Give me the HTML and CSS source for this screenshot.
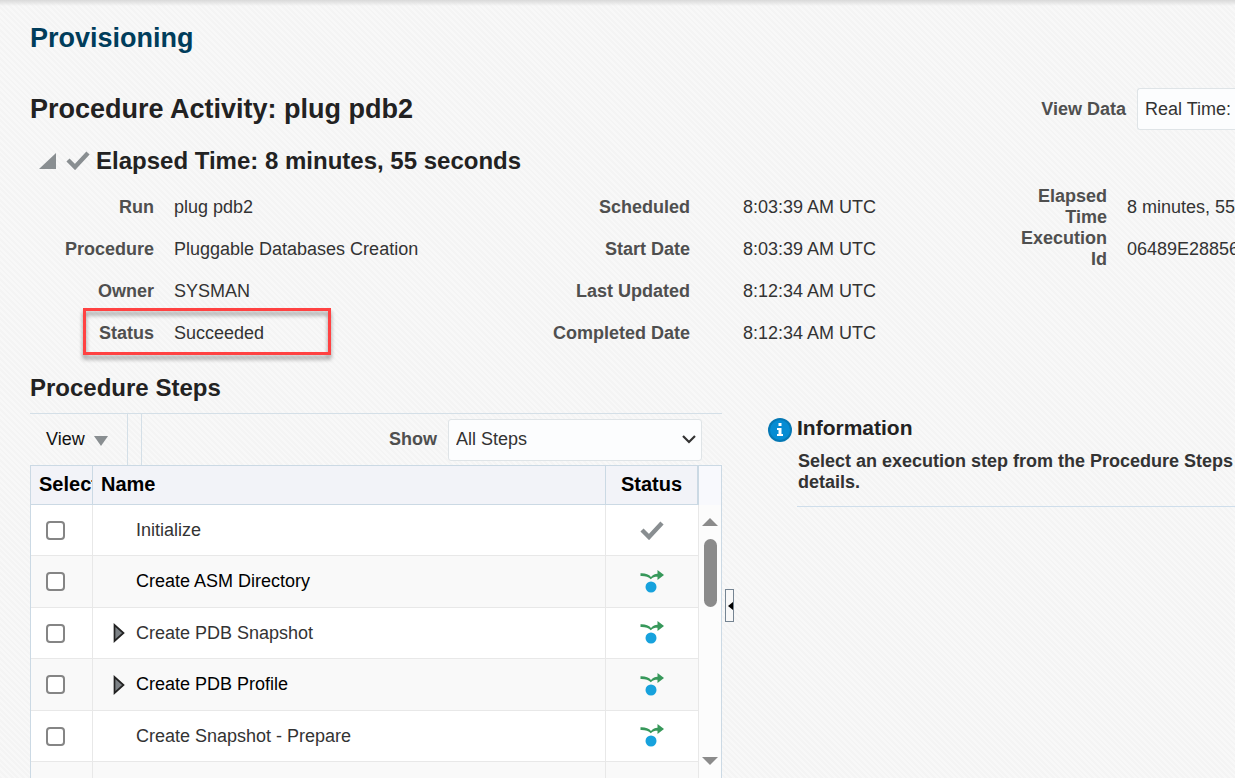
FILE: index.html
```html
<!DOCTYPE html>
<html lang="en">
<head>
<meta charset="utf-8">
<title>Provisioning</title>
<link rel="stylesheet" href="styles.css">
</head>
<body>
<svg class="sprite" aria-hidden="true">
  <symbol id="check" viewBox="0 0 24 20"><path d="M2 10l7 7L22 3" fill="none" stroke="#898e91" stroke-width="4.4"/></symbol>
  <symbol id="step" viewBox="0 0 24 24">
    <path d="M0.500 3.200C5 3 9 4 11 7C13 4.500 15 3.700 17.500 3.700V0L24 5L17.500 10V6.800C15 6.800 12.500 7.300 10.800 9.200C8.500 6.800 5 5.800 0.500 6Z" fill="#37985a"/>
    <circle cx="11" cy="17" r="5.500" fill="#17a2dd"/>
  </symbol>
  <symbol id="expand" viewBox="0 0 12 20"><path d="M1.500 2v16L10.500 10z" fill="#7c8185" stroke="#222" stroke-width="1.700"/></symbol>
</svg>
<main class="page">
  <h1 class="page-title">Provisioning</h1>
  <div class="activity-bar">
    <h2 class="activity-title">Procedure Activity: plug pdb2</h2>
    <label class="field-label" for="view-data">View Data</label>
    <select class="view-select" id="view-data"><option>Real Time:</option></select>
  </div>
  <div class="elapsed">
    <button class="disclose" type="button" aria-label="Collapse"><svg width="17" height="16" viewBox="0 0 17 16"><path d="M17 0v16H0z" fill="#898e91"/></svg></button>
    <svg class="elapsed-check"><use href="#check"/></svg>
    <h3 class="section-title">Elapsed Time: 8 minutes, 55 seconds</h3>
  </div>
  <section class="facts">
    <dl class="fact-group run">
      <div class="fact"><dt>Run</dt><dd>plug pdb2</dd></div>
      <div class="fact"><dt>Procedure</dt><dd>Pluggable Databases Creation</dd></div>
      <div class="fact"><dt>Owner</dt><dd>SYSMAN</dd></div>
      <div class="fact highlighted"><dt>Status</dt><dd>Succeeded</dd></div>
    </dl>
    <dl class="fact-group dates">
      <div class="fact"><dt>Scheduled</dt><dd>8:03:39 AM UTC</dd></div>
      <div class="fact"><dt>Start Date</dt><dd>8:03:39 AM UTC</dd></div>
      <div class="fact"><dt>Last Updated</dt><dd>8:12:34 AM UTC</dd></div>
      <div class="fact"><dt>Completed Date</dt><dd>8:12:34 AM UTC</dd></div>
    </dl>
    <dl class="fact-group execution">
      <div class="fact"><dt>Elapsed Time</dt><dd>8 minutes, 55</dd></div>
      <div class="fact"><dt>Execution Id</dt><dd>06489E28856</dd></div>
    </dl>
  </section>
  <div class="panels">
    <section class="steps">
      <h3 class="section-title steps-title">Procedure Steps</h3>
      <div class="toolbar">
        <button class="view-menu" type="button">View <svg class="menu-arrow" width="14" height="10" viewBox="0 0 14 10"><path d="M0 0h14L7 10z" fill="#898e91"/></svg></button>
        <div class="divider"></div>
        <label class="field-label" for="show">Show</label>
        <div class="select-box">
          <select class="show-select" id="show"><option>All Steps</option></select>
          <svg class="chevron" width="14" height="9" viewBox="0 0 14 9"><path d="M1 1l6 6 6-6" fill="none" stroke="#333" stroke-width="2.200"/></svg>
        </div>
      </div>
      <div class="grid">
        <table class="step-table">
          <thead><tr><th class="col-select">Select</th><th>Name</th><th class="col-status">Status</th></tr></thead>
          <tbody>
            <tr><td><input type="checkbox" aria-label="Initialize"></td><td><span class="name">Initialize</span></td><td class="state"><svg class="done"><use href="#check"/></svg></td></tr>
            <tr><td><input type="checkbox" aria-label="Create ASM Directory"></td><td><span class="name">Create ASM Directory</span></td><td class="state"><svg class="step"><use href="#step"/></svg></td></tr>
            <tr><td><input type="checkbox" aria-label="Create PDB Snapshot"></td><td><span class="name branch"><svg class="arrow"><use href="#expand"/></svg>Create PDB Snapshot</span></td><td class="state"><svg class="step"><use href="#step"/></svg></td></tr>
            <tr><td><input type="checkbox" aria-label="Create PDB Profile"></td><td><span class="name branch"><svg class="arrow"><use href="#expand"/></svg>Create PDB Profile</span></td><td class="state"><svg class="step"><use href="#step"/></svg></td></tr>
            <tr><td><input type="checkbox" aria-label="Create Snapshot - Prepare"></td><td><span class="name">Create Snapshot - Prepare</span></td><td class="state"><svg class="step"><use href="#step"/></svg></td></tr>
            <tr><td><input type="checkbox" aria-label="Next step"></td><td></td><td class="state"><svg class="done"><use href="#check"/></svg></td></tr>
          </tbody>
        </table>
        <div class="scroll">
          <div class="scroll-head"></div>
          <div class="scroll-track">
            <svg width="16" height="8" viewBox="0 0 16 8"><path d="M8 0l8 8H0z" fill="#8b8b8b"/></svg>
            <div class="thumb"></div>
            <svg class="scroll-down" width="16" height="8" viewBox="0 0 16 8"><path d="M0 0h16L8 8z" fill="#8b8b8b"/></svg>
          </div>
        </div>
      </div>
    </section>
    <div class="splitter"><button class="splitter-handle" type="button" aria-label="Collapse panel"><svg width="5" height="8" viewBox="0 0 5 8"><path d="M5 0v8L0 4z"/></svg></button></div>
    <aside class="info">
      <svg class="info-icon" width="24" height="24" viewBox="0 0 24 24"><circle cx="12" cy="12" r="12" fill="#0578b4"/><circle cx="12" cy="12" r="10" fill="#058cd3"/><path d="M10.500 5h3v3h-3zM9 10h4.500v6H15v2H9v-2h1.500v-4H9z" fill="#fff"/></svg>
      <div class="info-body">
        <h4 class="info-title">Information</h4>
        <p class="info-text">Select an execution step from the Procedure Steps<br>details.</p>
      </div>
    </aside>
  </div>
</main>
</body>
</html>
```

FILE: styles.css
```css
*, *::after { box-sizing: border-box; }
body {
  margin: 0;
  height: 100vh;
  overflow: hidden;
  font: 18px/21px "Liberation Sans", Arial, sans-serif;
  color: #333;
  background:
    linear-gradient(#d9d9d9, rgba(245, 245, 245, 0)) 0 0 / 100% 6px no-repeat,
    repeating-linear-gradient(45deg, #f4f4f4 0 2px, #f8f8f8 2px 4px);
}
h1, h2, h3, h4, p, dl, dd { margin: 0; }
button, select { font: inherit; color: inherit; }
button { padding: 0; border: 0; background: none; }
.sprite { position: absolute; width: 0; height: 0; }
.page { display: flex; flex-direction: column; height: 100%; padding: 20px 0 0 30px; overflow: hidden; }
.page-title { font-size: 27px; line-height: 36px; color: #003d5b; }
.activity-bar { display: flex; align-items: center; margin-top: 32px; }
.activity-title { flex: 1; font-size: 27px; line-height: 38px; color: #222; }
.field-label { color: #4f4f4f; font-weight: bold; }
.view-select, .show-select {
  appearance: none;
  height: 42px;
  padding: 0 7px;
  border: 1px solid #dfe4e7;
  border-radius: 3px;
  background: #fcfdfe;
}
.view-select { width: 98px; margin-left: 11px; padding-right: 0; border-right: 0; border-radius: 3px 0 0 3px; }
.elapsed { display: flex; align-items: center; height: 40px; margin-top: 11px; padding-left: 9px; }
.disclose { display: flex; width: 17px; }
.elapsed-check { width: 24px; height: 20px; margin: 0 6px 2px 10px; }
.section-title { font-size: 24px; line-height: 30px; color: #222; }
.facts { display: grid; grid-template-columns: 450fr 536fr 219fr; margin-top: 5px; }
.fact-group { min-width: 0; }
.fact { display: grid; align-items: center; height: 42px; white-space: nowrap; }
.run .fact { grid-template-columns: 124px 1fr; column-gap: 20px; }
.dates .fact { grid-template-columns: 210px 1fr; column-gap: 53px; }
.execution .fact { grid-template-columns: 91px 1fr; column-gap: 20px; }
.execution dt { white-space: normal; }
.fact dt { text-align: right; font-weight: bold; color: #4f4f4f; }
.highlighted { position: relative; }
.highlighted::after {
  content: "";
  position: absolute;
  left: 53px;
  top: -4px;
  width: 248px;
  height: 47px;
  border: 3px solid #ff4242;
  filter: drop-shadow(0 4px 2px rgba(0, 0, 0, .4));
}
.panels { display: grid; grid-template-columns: 692fr 513fr; grid-template-rows: 1fr; flex: 1; min-height: 0; position: relative; }
.steps { display: flex; flex-direction: column; min-width: 0; min-height: 0; }
.steps-title { margin: 19px 0 10px; }
.toolbar { display: flex; align-items: center; height: 52px; border-top: 1px solid #d4dfe7; padding-right: 20px; }
.view-menu { display: flex; align-items: center; gap: 9px; width: 98px; height: 100%; padding-left: 16px; border-right: 1px solid #d4dfe7; color: #111; }
.menu-arrow { margin-top: 2px; }
.divider { width: 14px; height: 100%; border-right: 1px solid #d4dfe7; margin-right: auto; }
.select-box { display: grid; align-items: center; width: 254px; margin-left: 11px; }
.show-select, .chevron { grid-area: 1 / 1; }
.chevron { justify-self: end; margin-right: 6px; pointer-events: none; }
.grid { display: flex; flex: 1; min-height: 0; overflow: hidden; border: 1px solid #cbd9e4; border-bottom: 0; background: #fff; }
.step-table { flex: 1; width: 100%; min-width: 0; align-self: flex-start; table-layout: fixed; border-collapse: separate; border-spacing: 0; }
.step-table th { height: 39px; padding: 0 0 2px 8px; overflow: hidden; font-size: 20px; text-align: left; color: #000; background: #f2f3f8; border-right: 1px solid #cbd9e4; border-bottom: 1px solid #cbd9e4; }
.step-table .col-select { width: 62px; }
.step-table .col-status { width: 93px; padding-left: 0; text-align: center; border-right-width: 2px; }
.step-table td { height: 51px; padding: 0; border-right: 1px solid #e8e8e8; border-bottom: 1px solid #e8e8e8; }
.step-table tbody tr:nth-child(even) td { height: 52px; background: #f9f9f9; }
.step-table tbody tr:nth-child(even) { color: #000; }
.step-table input { appearance: none; display: block; width: 19px; height: 19px; margin: 0 0 0 15px; border: 2px solid #858585; border-radius: 4px; background: #fff; }
.step-table input:checked { background: #17a2dd; }
.name { display: flex; align-items: center; padding-left: 43px; }
.branch { padding-left: 20px; }
.arrow { width: 12px; height: 20px; margin-right: 11px; }
.state svg { display: block; margin: 0 auto; }
.done { width: 24px; height: 20px; }
.step { width: 24px; height: 24px; }
.scroll { display: flex; flex: none; flex-direction: column; width: 22px; }
.scroll-head { height: 39px; background: #f8f9fd; }
.scroll-track { display: flex; flex: 1; flex-direction: column; align-items: center; padding: 13px 0; background: #fcfcfc; }
.thumb { width: 13px; height: 68px; margin-top: 13px; border-radius: 7px; background: #8b8b8b; }
.scroll-down { margin-top: auto; }
.splitter { position: absolute; left: calc(100% * 692 / 1205 + 3px); top: 235px; }
.splitter-handle { display: flex; align-items: center; justify-content: flex-end; width: 9px; height: 33px; border: 1px solid #758492; background: #f8f8f8; }
.info { display: flex; gap: 5px; margin-top: 64px; padding-left: 46px; min-width: 0; }
.info-icon { flex: none; }
.info-body { flex: 1; min-width: 0; align-self: flex-start; border-bottom: 1px solid #cfdeeb; }
.info-title { font-size: 21px; line-height: 20px; color: #222; }
.info-text { margin: 13px 0; padding-left: 1px; font-weight: bold; white-space: nowrap; }
```
